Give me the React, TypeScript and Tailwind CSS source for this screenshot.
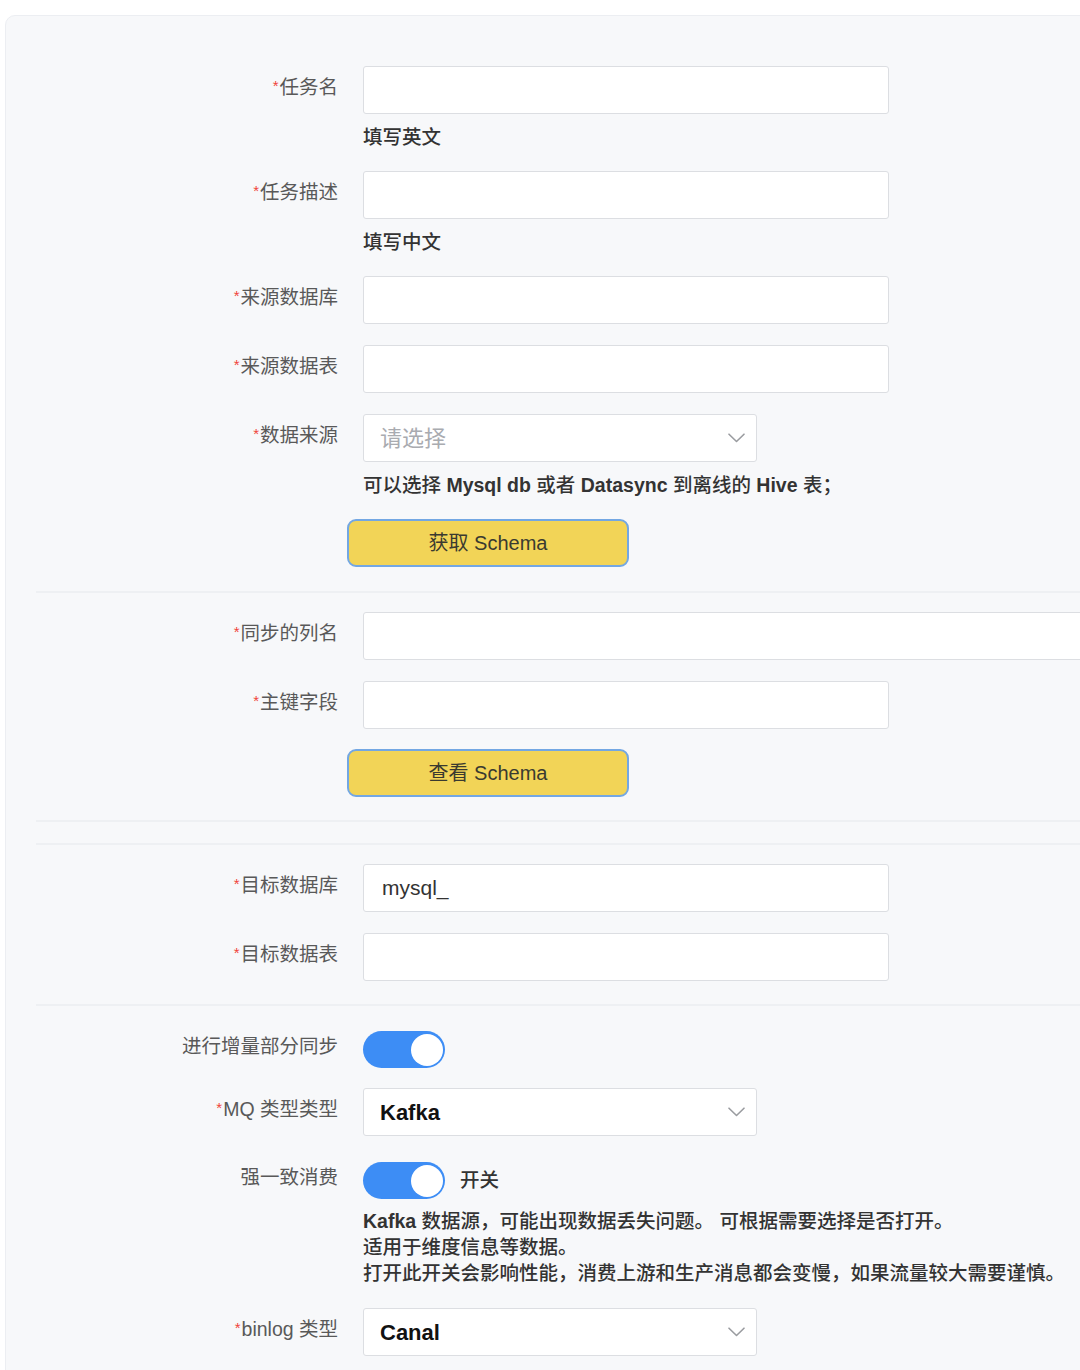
import React from "react";

const FONT = { fontFamily: '"Liberation Sans", "Noto Sans CJK SC", sans-serif' };

function Label({ text, required = true }: { text: string; required?: boolean }) {
  return (
    <div className="w-[332px] shrink-0 h-[40px] leading-[40px] text-right text-[19.5px] text-[#595959]">
      {required && <span className="text-[#f0443a] text-[15px] align-[3px] mr-[1px]">*</span>}
      {text}
    </div>
  );
}

function TextInput({ value = "", wide = false }: { value?: string; wide?: boolean }) {
  return (
    <input
      readOnly
      defaultValue={value}
      style={FONT}
      className={`${wide ? "w-[760px]" : "w-[526px]"} h-[48px] rounded-[3px] border border-[#dcdee2] bg-white px-[18px] text-[21px] text-[#333] outline-none`}
    />
  );
}

function Chevron() {
  return (
    <svg width="17" height="10" viewBox="0 0 17 10" fill="none">
      <path d="M1 1.2 L8.5 8.5 L16 1.2" stroke="#9a9ca0" strokeWidth="1.6" strokeLinecap="round" strokeLinejoin="round" />
    </svg>
  );
}

function Select({ value, placeholder }: { value?: string; placeholder?: string }) {
  return (
    <div className="w-[394px] h-[48px] rounded-[3px] border border-[#dcdee2] bg-white flex items-center justify-between pl-[16px] pr-[11px]">
      {value ? (
        <span className="text-[22px] font-bold text-[#111]">{value}</span>
      ) : (
        <span className="text-[22px] text-[#a9abb0]">{placeholder}</span>
      )}
      <Chevron />
    </div>
  );
}

function Helper({ children }: { children: React.ReactNode }) {
  return <div className="mt-[10px] h-[26px] leading-[26px] text-[19.5px] font-medium text-[#333] whitespace-nowrap">{children}</div>;
}

function B({ children }: { children: React.ReactNode }) {
  return <span className="font-semibold">{children}</span>;
}

function Switch() {
  return (
    <div className="mt-[5px] w-[82px] h-[37px] rounded-full bg-[#3d8df5] flex items-center justify-end pr-[2px] shrink-0">
      <div className="w-[32px] h-[32px] rounded-full bg-white" />
    </div>
  );
}

function YellowButton({ text }: { text: string }) {
  return (
    <div className="flex">
      <div className="w-[332px] shrink-0" />
      <div className="ml-[9px] w-[282px] h-[48px] rounded-[9px] border-2 border-[#73a7e3] bg-[#f2d457] flex items-center justify-center text-[20px] text-[#3a3a30]">
        {text}
      </div>
    </div>
  );
}

function Divider() {
  return <div className="ml-[30px] h-[2px] bg-[#eef0f3]" />;
}

function Row({ label, required = true, children, className = "" }: { label: string; required?: boolean; children: React.ReactNode; className?: string }) {
  return (
    <div className={`flex items-start ${className}`}>
      <Label text={label} required={required} />
      <div className="ml-[25px] flex flex-col">{children}</div>
    </div>
  );
}

export default function App() {
  return (
    <div style={FONT} className="w-[1080px] h-[1370px] overflow-hidden bg-white">
      <div className="ml-[5px] mt-[15px] w-[1120px] h-[1400px] rounded-tl-[10px] border border-[#eceef2] bg-[#f7f8fa] pt-[50px]">
        <Row label="任务名" className="mb-[21px]">
          <TextInput />
          <Helper>填写英文</Helper>
        </Row>
        <Row label="任务描述" className="mb-[21px]">
          <TextInput />
          <Helper>填写中文</Helper>
        </Row>
        <Row label="来源数据库" className="mb-[21px]">
          <TextInput />
        </Row>
        <Row label="来源数据表" className="mb-[21px]">
          <TextInput />
        </Row>
        <Row label="数据来源" className="mb-[21px]">
          <Select placeholder="请选择" />
          <Helper>
            可以选择 <B>Mysql db</B> 或者 <B>Datasync</B> 到离线的 <B>Hive</B> 表；
          </Helper>
        </Row>
        <YellowButton text="获取 Schema" />
        <div className="mt-[24px]" />
        <Divider />
        <div className="mt-[19px]" />
        <Row label="同步的列名" className="mb-[21px]">
          <TextInput wide />
        </Row>
        <Row label="主键字段" className="mb-[20px]">
          <TextInput />
        </Row>
        <YellowButton text="查看 Schema" />
        <div className="mt-[23px]" />
        <Divider />
        <div className="mt-[21px]" />
        <Divider />
        <div className="mt-[19px]" />
        <Row label="目标数据库" className="mb-[21px]">
          <TextInput value="mysql_" />
        </Row>
        <Row label="目标数据表" className="mb-[23px]">
          <TextInput />
        </Row>
        <Divider />
        <div className="mt-[20px]" />
        <Row label="进行增量部分同步" required={false} className="mb-[20px]">
          <Switch />
        </Row>
        <Row label="MQ 类型类型" className="mb-[21px]">
          <Select value="Kafka" />
        </Row>
        <Row label="强一致消费" required={false} className="mb-[22px]">
          <div className="flex items-center">
            <Switch />
            <span className="ml-[15px] mt-[5px] text-[19.5px] font-medium text-[#333]">开关</span>
          </div>
          <div className="mt-[9px] leading-[26px] text-[19.5px] font-medium text-[#333] whitespace-nowrap">
            <div>
              <B>Kafka</B> 数据源，可能出现数据丢失问题。 可根据需要选择是否打开。
            </div>
            <div>适用于维度信息等数据。</div>
            <div>打开此开关会影响性能，消费上游和生产消息都会变慢，如果流量较大需要谨慎。</div>
          </div>
        </Row>
        <Row label="binlog 类型">
          <Select value="Canal" />
        </Row>
      </div>
    </div>
  );
}
